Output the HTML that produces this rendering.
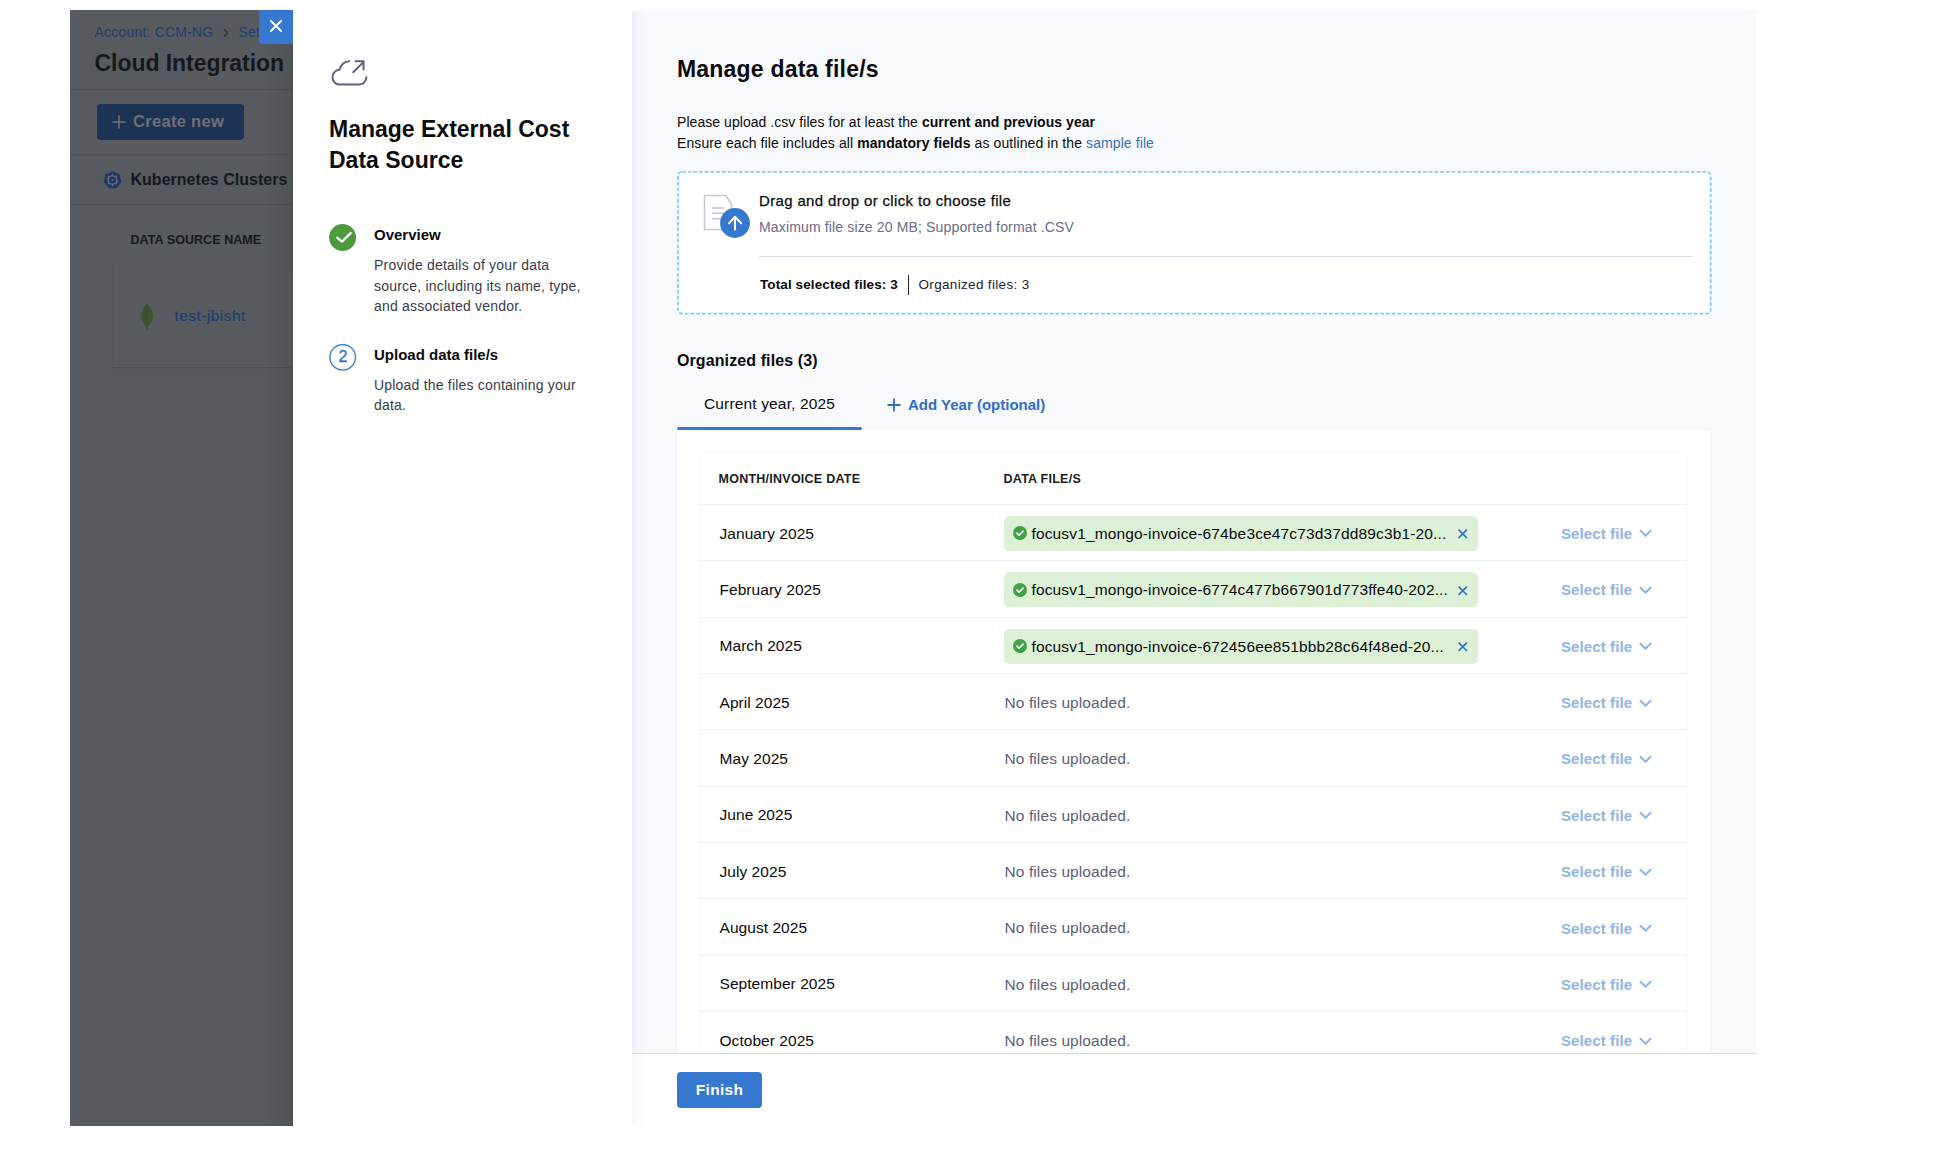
<!DOCTYPE html>
<html><head><meta charset="utf-8">
<style>
*{box-sizing:border-box;margin:0;padding:0}
html,body{width:1934px;height:1156px;overflow:hidden;background:#fff;font-family:"Liberation Sans",sans-serif;color:#0b0b0d}
.abs{position:absolute}
.t{position:absolute;white-space:nowrap;line-height:1}
#bgpage{position:absolute;left:70px;top:10px;width:223px;height:1116px;background:#575b5f;overflow:hidden}
#bgshade{position:absolute;right:0;top:0;width:30px;height:100%;background:linear-gradient(to right,rgba(0,0,0,0),rgba(0,0,0,.10))}
#close{position:absolute;left:259px;top:10px;width:34px;height:34px;background:#3677cf;border-bottom-left-radius:4px}
#mid{position:absolute;left:293px;top:10px;width:339px;height:1116px;background:#fff}
#right{position:absolute;left:632px;top:10px;width:1124px;height:1116px;background:#f7f9fc;overflow:hidden}
#rshade{position:absolute;left:0;top:0;width:14px;height:100%;z-index:5;background:linear-gradient(to right,rgba(40,41,61,.045),rgba(40,41,61,.015) 40%,rgba(40,41,61,0))}
#drop{position:absolute;left:44.5px;top:161px;width:1035px;height:144px}
#tblwrap{position:absolute;left:45px;top:419.5px;width:1033.5px;height:700px;background:#fff;border-radius:4px;box-shadow:0 0 1px rgba(40,41,61,.10),0 1px 3px rgba(96,97,112,.08)}
#tbl{position:absolute;left:23px;top:23px;width:987px;height:700px;background:#fff;box-shadow:0 0 2px rgba(40,41,61,.10)}
.hd{font-size:12.5px;font-weight:bold;color:#1b1b22;letter-spacing:.25px}
.row{position:absolute;left:0;width:987px;height:56.36px;border-top:1px solid #eeeff6}
.month{left:19.5px;top:20.8px;font-size:15.5px;color:#0b0b0d;letter-spacing:.05px}
.nof{left:304.5px;top:21px;font-size:15.5px;color:#5b5e76;letter-spacing:.1px}
.chip{position:absolute;left:304px;top:11px;width:474px;height:35px;background:#dcf0d6;border-radius:5px}
.chip .ck{position:absolute;left:9px;top:10.5px}
.chip .fn{position:absolute;left:27.5px;top:10px;font-size:15.5px;line-height:1;color:#0b0b0d;white-space:nowrap;letter-spacing:.14px}
.chip .x{position:absolute;left:453.5px;top:13.3px}
.sel{left:861px;top:21.2px;font-size:15px;font-weight:bold;color:#8fb5e6;letter-spacing:.1px}
.chev{position:absolute;left:939px;top:24.6px}
#footer{position:absolute;left:0;top:1043px;width:1124px;height:73px;background:#fff;border-top:1px solid #d9dae5}
#finish{position:absolute;left:45px;top:18px;width:85px;height:36px;background:#3677cf;border-radius:4px;color:#fff;font-weight:bold;font-size:15.5px;line-height:36px;text-align:center;letter-spacing:.3px}
</style></head><body>
<div id="bgpage">
  <div class="t" style="left:24.5px;top:15.4px;font-size:14px;color:#1f3d6c;letter-spacing:.2px">Account: CCM-NG</div>
  <svg class="abs" style="left:152px;top:18px" width="8" height="10" viewBox="0 0 8 10"><path d="M2 1.5l3.5 3.5L2 8.5" stroke="#2a2f3a" stroke-width="1.3" fill="none"/></svg>
  <div class="t" style="left:168.5px;top:15.4px;font-size:14px;color:#1f3d6c;letter-spacing:.2px">Settings</div>
  <div class="t" style="left:24.5px;top:42.3px;font-size:23px;font-weight:bold;color:#15181d;letter-spacing:-.05px">Cloud Integration</div>
  <div class="abs" style="left:0;top:79px;width:223px;height:1px;background:#4e5256"></div>
  <div class="abs" style="left:27px;top:94px;width:147px;height:36px;background:#1c3356;border-radius:4px"></div>
  <svg class="abs" style="left:42px;top:104.8px" width="14" height="14" viewBox="0 0 14 14"><path d="M7 0.5v13M0.5 7h13" stroke="#6d7075" stroke-width="1.6"/></svg>
  <div class="t" style="left:63px;top:103.2px;font-size:16.5px;font-weight:bold;color:#6d7075;letter-spacing:.3px">Create new</div>
  <div class="abs" style="left:0;top:143.5px;width:223px;height:1px;background:#4e5256"></div>
  <svg class="abs" style="left:33px;top:159.6px" width="19" height="19" viewBox="0 0 19 19">
    <path d="M9.5 1.2L16.6 4.6 18.3 12.2 13.4 18.2H5.6L0.7 12.2 2.4 4.6z" fill="#203668"/>
    <circle cx="9.5" cy="10" r="4.3" fill="none" stroke="#626874" stroke-width="1.6"/>
    <path d="M9.5 3.8v2.4M9.5 13.8v2.4M3.6 8.4l2.3.6M13.1 11l2.3.6M4.9 14.3l1.6-1.8M12.5 7.5l1.6-1.8M4.9 5.7l1.6 1.8M12.5 12.5l1.6 1.8" stroke="#626874" stroke-width="1.3"/>
    <circle cx="9.5" cy="10" r="1.1" fill="#626874"/>
  </svg>
  <div class="t" style="left:60.5px;top:161.5px;font-size:16px;font-weight:bold;color:#15181d;letter-spacing:.02px">Kubernetes Clusters</div>
  <div class="abs" style="left:0;top:194px;width:223px;height:1px;background:#4e5256"></div>
  <div class="t" style="left:60.5px;top:224px;font-size:12.5px;font-weight:bold;color:#15181d;letter-spacing:.07px">DATA SOURCE NAME</div>
  <div class="abs" style="left:43px;top:254.7px;width:200px;height:102px;background:#585c60;box-shadow:0 1px 1px rgba(0,0,0,.10),0 0 1px rgba(0,0,0,.05)"></div>
  <svg class="abs" style="left:70px;top:293px" width="14" height="28" viewBox="0 0 14 28"><path d="M7 0.5C3.5 4 1 8 1 13c0 5 3 9 6 11 3-2 6-6 6-11 0-5-2.5-9-6-12.5z" fill="#3a5530"/><path d="M7 1v26" stroke="#34492c" stroke-width=".8"/></svg>
  <div class="t" style="left:104.5px;top:297.6px;font-size:15.5px;color:#1e3d6b;letter-spacing:.45px;-webkit-text-stroke:.2px #1e3d6b">test-jbisht</div>
  <div id="bgshade"></div>
</div>
<div id="close"><svg class="abs" style="left:11px;top:10px" width="12" height="12" viewBox="0 0 12 12"><path d="M1 1l10 10M11 1L1 11" stroke="#fff" stroke-width="2" stroke-linecap="round"/></svg></div>
<div id="mid">
  <svg class="abs" style="left:27px;top:40px" width="60" height="50" viewBox="0 0 60 50">
    <g fill="none" stroke="#60627a" stroke-width="2" stroke-linecap="round" stroke-linejoin="round">
      <path d="M29.3 11.3A10 10 0 0 0 19.6 19.8A7.4 7.4 0 0 0 20.2 34.6H39A7.3 7.3 0 0 0 46.3 27.3"/>
      <path d="M33.2 22.3L43.4 12.1M35.6 11.3H43.6V19.5"/>
    </g>
  </svg>
  <div class="t" style="left:36px;top:104px;font-size:23px;font-weight:bold;line-height:31px;letter-spacing:0px">Manage External Cost<br>Data Source</div>
  <svg class="abs" style="left:36px;top:214px" width="28" height="28" viewBox="0 0 28 28"><circle cx="13.6" cy="13.5" r="13.5" fill="#4e9b3f"/><path d="M8.1 13.6L12.9 17.7 21.8 8.9" stroke="#fff" stroke-width="2.2" fill="none" stroke-linecap="round" stroke-linejoin="round"/></svg>
  <div class="t" style="left:81px;top:217px;font-size:15px;font-weight:bold">Overview</div>
  <div class="t" style="left:81px;top:245.3px;font-size:14px;line-height:20.2px;color:#3a3b48;letter-spacing:.2px">Provide details of your data<br>source, including its name, type,<br>and associated vendor.</div>
  <svg class="abs" style="left:36px;top:334px" width="28" height="28" viewBox="0 0 28 28"><circle cx="13.7" cy="13.3" r="12.8" fill="none" stroke="#3c80da" stroke-width="1.4"/></svg>
  <div class="t" style="left:45.5px;top:338.5px;font-size:16px;color:#2f73d0;-webkit-text-stroke:.35px #2f73d0">2</div>
  <div class="t" style="left:81px;top:337px;font-size:15px;font-weight:bold">Upload data file/s</div>
  <div class="t" style="left:81px;top:365.2px;font-size:14px;line-height:20.2px;color:#3a3b48;letter-spacing:.2px">Upload the files containing your<br>data.</div>
</div>
<div id="right">
  <div id="rshade"></div>
  <div class="t" style="left:45px;top:47.5px;font-size:23px;font-weight:bold;letter-spacing:.2px">Manage data file/s</div>
  <div class="t" style="left:45px;top:101.5px;font-size:14px;line-height:21.4px;letter-spacing:.05px">Please upload .csv files for at least the <b>current and previous year</b><br><span style="letter-spacing:.09px">Ensure each file includes all <b>mandatory fields</b> as outlined in the <span style="color:#3473ba">sample file</span></span></div>
  <svg id="drop" width="1035" height="144" viewBox="0 0 1035 144"><rect x="1" y="0.8" width="1032.7" height="141.8" rx="4" ry="4" fill="#fff" stroke="#80cdf0" stroke-width="1.8" stroke-dasharray="3.8 1.9"/></svg>
  <svg class="abs" style="left:70px;top:183px" width="50" height="50" viewBox="0 0 50 50">
    <path d="M2.5 2.5H23.7L29.5 11V36.5H2.5z" fill="#fff" stroke="#c6c6d6" stroke-width="1.6" stroke-linejoin="round"/>
    <path d="M10 15h12M10 20.3h12M10 25.8h12" stroke="#c6c6d6" stroke-width="1.6"/>
    <circle cx="33" cy="30" r="14.9" fill="#3677cf"/>
    <path d="M33 36.4V23.7M27 30.3L33 23.7 39.2 30.3" stroke="#fff" stroke-width="2" fill="none" stroke-linecap="round" stroke-linejoin="round"/>
  </svg>
  <div class="t" style="left:127px;top:183.4px;font-size:15px;color:#0b0b0d;letter-spacing:.35px;-webkit-text-stroke:.25px #0b0b0d">Drag and drop or click to choose file</div>
  <div class="t" style="left:127px;top:210.3px;font-size:14px;color:#6a6c88;letter-spacing:.15px">Maximum file size 20 MB; Supported format .CSV</div>
  <div class="abs" style="left:127px;top:245.6px;width:933px;height:1px;background:#d9dae3"></div>
  <div class="t" style="left:128px;top:268.2px;font-size:13.5px;font-weight:bold;color:#0b0b0d;letter-spacing:.1px">Total selected files: 3</div>
  <div class="abs" style="left:275.5px;top:265px;width:1.5px;height:19.5px;background:#22222a"></div>
  <div class="t" style="left:286.5px;top:268.2px;font-size:13.5px;color:#22222a;letter-spacing:.33px">Organized files: 3</div>
  <div class="t" style="left:45px;top:342.5px;font-size:16px;font-weight:bold;letter-spacing:.1px">Organized files (3)</div>
  <div class="t" style="left:72px;top:386.1px;font-size:15.5px;color:#0b0b0d;letter-spacing:.15px">Current year, 2025</div>
  <div class="abs" style="left:45px;top:417px;width:185px;height:3px;background:#3677cf;border-radius:2px"></div>
  <svg class="abs" style="left:255px;top:388px" width="14" height="14" viewBox="0 0 14 14"><path d="M7 0.5v13M0.5 7h13" stroke="#2f6fc6" stroke-width="1.8"/></svg>
  <div class="t" style="left:276px;top:387px;font-size:15px;font-weight:bold;color:#2f6fc6">Add Year (optional)</div>
  <div id="tblwrap">
    <div id="tbl">
      <div class="t hd" style="left:18.5px;top:20px">MONTH/INVOICE DATE</div>
      <div class="t hd" style="left:303.5px;top:20px">DATA FILE/S</div>
      <div class="row" style="top:51.40px">
<div class="t month">January 2025</div>
<div class="chip"><svg class="ck" width="14" height="14" viewBox="0 0 14 14"><circle cx="7" cy="7" r="7" fill="#44a047"/><path d="M3.9 7.1l2.1 2.1 4.1-4.1" stroke="#fff" stroke-width="1.5" fill="none" stroke-linecap="round" stroke-linejoin="round"/></svg><span class="fn">focusv1_mongo-invoice-674be3ce47c73d37dd89c3b1-20...</span><svg class="x" width="10" height="10" viewBox="0 0 10 10"><path d="M1.1 1.1l7.4 7.4M8.5 1.1l-7.4 7.4" stroke="#2d6fd0" stroke-width="1.7" stroke-linecap="round"/></svg></div>
<div class="t sel">Select file</div><svg class="chev" width="13" height="9" viewBox="0 0 13 9"><path d="M1.5 1.8l5 5 5-5" stroke="#8fb5e6" stroke-width="2" fill="none" stroke-linecap="round" stroke-linejoin="round"/></svg>
</div>
<div class="row" style="top:107.75px">
<div class="t month">February 2025</div>
<div class="chip"><svg class="ck" width="14" height="14" viewBox="0 0 14 14"><circle cx="7" cy="7" r="7" fill="#44a047"/><path d="M3.9 7.1l2.1 2.1 4.1-4.1" stroke="#fff" stroke-width="1.5" fill="none" stroke-linecap="round" stroke-linejoin="round"/></svg><span class="fn">focusv1_mongo-invoice-6774c477b667901d773ffe40-202...</span><svg class="x" width="10" height="10" viewBox="0 0 10 10"><path d="M1.1 1.1l7.4 7.4M8.5 1.1l-7.4 7.4" stroke="#2d6fd0" stroke-width="1.7" stroke-linecap="round"/></svg></div>
<div class="t sel">Select file</div><svg class="chev" width="13" height="9" viewBox="0 0 13 9"><path d="M1.5 1.8l5 5 5-5" stroke="#8fb5e6" stroke-width="2" fill="none" stroke-linecap="round" stroke-linejoin="round"/></svg>
</div>
<div class="row" style="top:164.10px">
<div class="t month">March 2025</div>
<div class="chip"><svg class="ck" width="14" height="14" viewBox="0 0 14 14"><circle cx="7" cy="7" r="7" fill="#44a047"/><path d="M3.9 7.1l2.1 2.1 4.1-4.1" stroke="#fff" stroke-width="1.5" fill="none" stroke-linecap="round" stroke-linejoin="round"/></svg><span class="fn">focusv1_mongo-invoice-672456ee851bbb28c64f48ed-20...</span><svg class="x" width="10" height="10" viewBox="0 0 10 10"><path d="M1.1 1.1l7.4 7.4M8.5 1.1l-7.4 7.4" stroke="#2d6fd0" stroke-width="1.7" stroke-linecap="round"/></svg></div>
<div class="t sel">Select file</div><svg class="chev" width="13" height="9" viewBox="0 0 13 9"><path d="M1.5 1.8l5 5 5-5" stroke="#8fb5e6" stroke-width="2" fill="none" stroke-linecap="round" stroke-linejoin="round"/></svg>
</div>
<div class="row" style="top:220.45px">
<div class="t month">April 2025</div>
<div class="t nof">No files uploaded.</div>
<div class="t sel">Select file</div><svg class="chev" width="13" height="9" viewBox="0 0 13 9"><path d="M1.5 1.8l5 5 5-5" stroke="#8fb5e6" stroke-width="2" fill="none" stroke-linecap="round" stroke-linejoin="round"/></svg>
</div>
<div class="row" style="top:276.80px">
<div class="t month">May 2025</div>
<div class="t nof">No files uploaded.</div>
<div class="t sel">Select file</div><svg class="chev" width="13" height="9" viewBox="0 0 13 9"><path d="M1.5 1.8l5 5 5-5" stroke="#8fb5e6" stroke-width="2" fill="none" stroke-linecap="round" stroke-linejoin="round"/></svg>
</div>
<div class="row" style="top:333.15px">
<div class="t month">June 2025</div>
<div class="t nof">No files uploaded.</div>
<div class="t sel">Select file</div><svg class="chev" width="13" height="9" viewBox="0 0 13 9"><path d="M1.5 1.8l5 5 5-5" stroke="#8fb5e6" stroke-width="2" fill="none" stroke-linecap="round" stroke-linejoin="round"/></svg>
</div>
<div class="row" style="top:389.50px">
<div class="t month">July 2025</div>
<div class="t nof">No files uploaded.</div>
<div class="t sel">Select file</div><svg class="chev" width="13" height="9" viewBox="0 0 13 9"><path d="M1.5 1.8l5 5 5-5" stroke="#8fb5e6" stroke-width="2" fill="none" stroke-linecap="round" stroke-linejoin="round"/></svg>
</div>
<div class="row" style="top:445.85px">
<div class="t month">August 2025</div>
<div class="t nof">No files uploaded.</div>
<div class="t sel">Select file</div><svg class="chev" width="13" height="9" viewBox="0 0 13 9"><path d="M1.5 1.8l5 5 5-5" stroke="#8fb5e6" stroke-width="2" fill="none" stroke-linecap="round" stroke-linejoin="round"/></svg>
</div>
<div class="row" style="top:502.20px">
<div class="t month">September 2025</div>
<div class="t nof">No files uploaded.</div>
<div class="t sel">Select file</div><svg class="chev" width="13" height="9" viewBox="0 0 13 9"><path d="M1.5 1.8l5 5 5-5" stroke="#8fb5e6" stroke-width="2" fill="none" stroke-linecap="round" stroke-linejoin="round"/></svg>
</div>
<div class="row" style="top:558.55px">
<div class="t month">October 2025</div>
<div class="t nof">No files uploaded.</div>
<div class="t sel">Select file</div><svg class="chev" width="13" height="9" viewBox="0 0 13 9"><path d="M1.5 1.8l5 5 5-5" stroke="#8fb5e6" stroke-width="2" fill="none" stroke-linecap="round" stroke-linejoin="round"/></svg>
</div>
<div class="row" style="top:614.90px">
<div class="t month">November 2025</div>
<div class="t nof">No files uploaded.</div>
<div class="t sel">Select file</div><svg class="chev" width="13" height="9" viewBox="0 0 13 9"><path d="M1.5 1.8l5 5 5-5" stroke="#8fb5e6" stroke-width="2" fill="none" stroke-linecap="round" stroke-linejoin="round"/></svg>
</div>
    </div>
  </div>
  <div id="footer">
    <div id="finish">Finish</div>
  </div>
</div>
</body></html>
